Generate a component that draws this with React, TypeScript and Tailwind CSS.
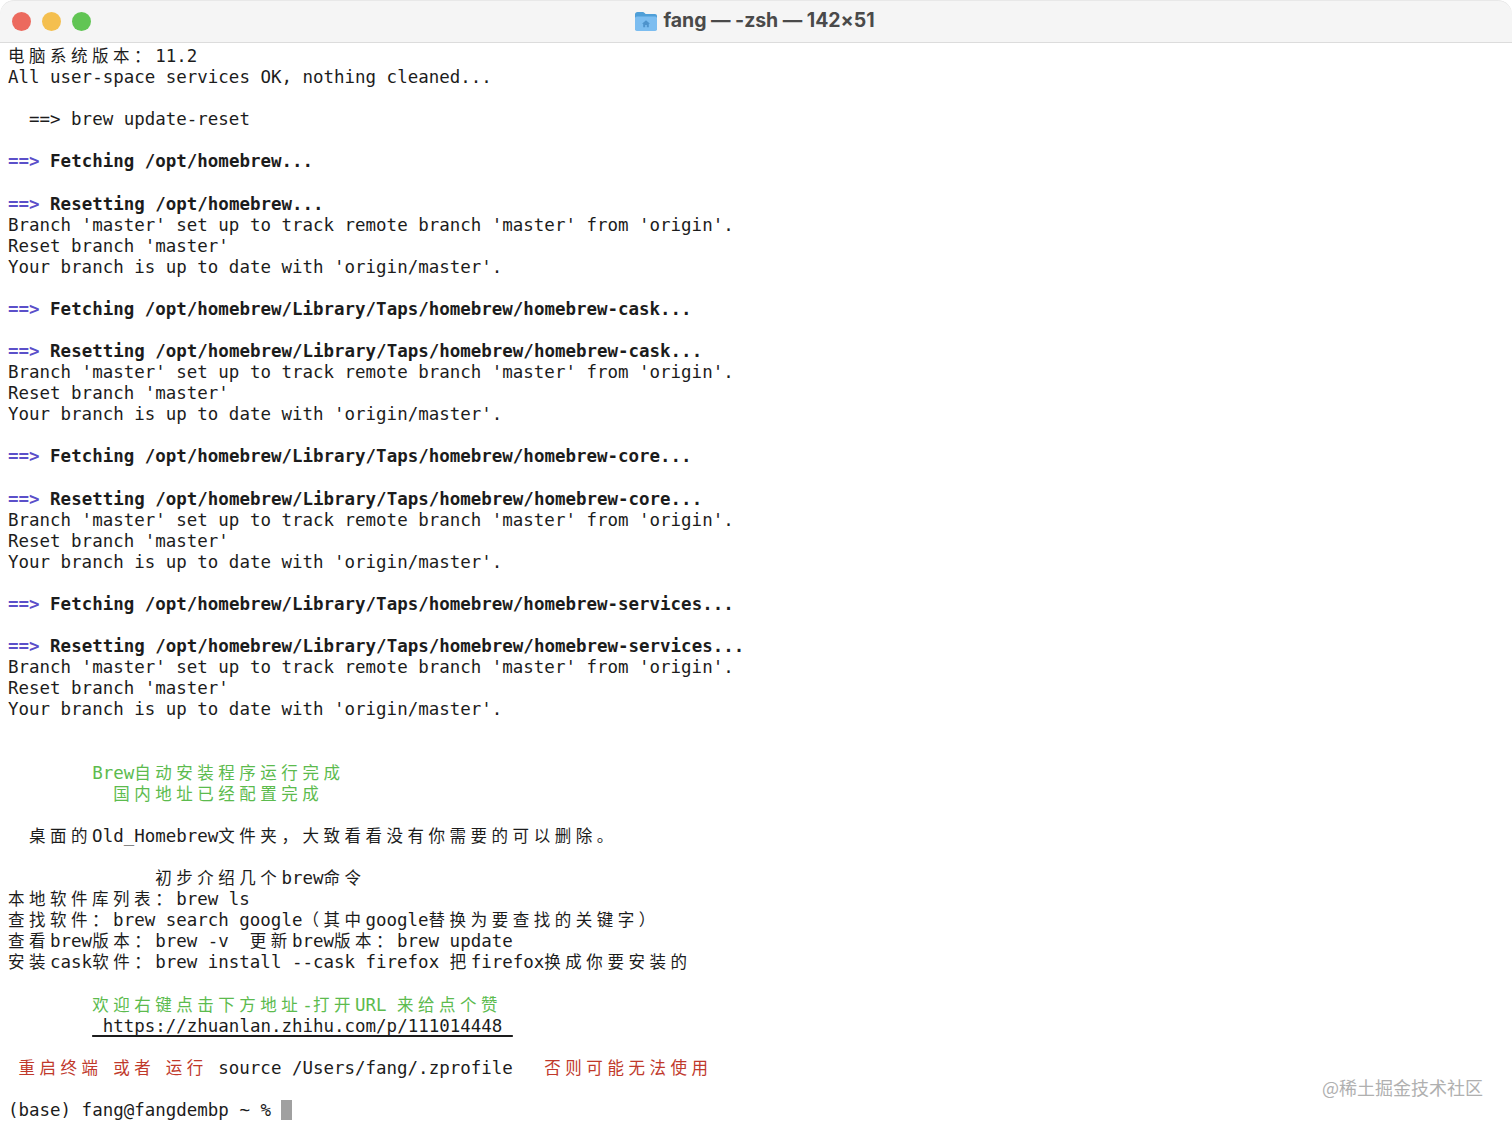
import React from "react";

const CJK = /([\u3000-\u9fff\uff00-\uffef]+)/;

function T({ children, className = "" }: { children: string; className?: string }) {
  const parts = children.split(CJK);
  return (
    <span className={className}>
      {parts.map((p, i) =>
        CJK.test(p) ? (
          <span key={i} className="text-[16.5px] leading-none tracking-[4.52px] font-normal [font-family:'Noto_Sans_CJK_SC','Noto_Sans',sans-serif]">
            {p}
          </span>
        ) : (
          <React.Fragment key={i}>{p}</React.Fragment>
        )
      )}
    </span>
  );
}

function Row({ children }: { children?: React.ReactNode }) {
  return <div className="h-[21.08px] leading-[21.08px] whitespace-pre">{children ?? " "}</div>;
}

function Head({ children }: { children: string }) {
  return (
    <Row>
      <span className="font-bold text-[#5b4fc9]">==&gt;</span> <span className="font-bold">{children}</span>
    </Row>
  );
}

function Git() {
  return (
    <>
      <Row>Branch 'master' set up to track remote branch 'master' from 'origin'.</Row>
      <Row>Reset branch 'master'</Row>
      <Row>Your branch is up to date with 'origin/master'.</Row>
    </>
  );
}

const green = "text-[#5cbb4e]";
const red = "text-[#c0392b]";

export default function App() {
  return (
    <div className="relative h-[1128px] w-full overflow-hidden bg-white">
      <div className="flex h-full flex-col overflow-hidden rounded-[14px] bg-white">
        <header className="flex h-[43px] shrink-0 items-center justify-center rounded-t-[14px] border-b border-[#dcdcdc] bg-[#f5f5f5] pr-[4px] shadow-[inset_0_1px_0_#e8e8e8]">
          <div className="absolute left-[11.5px] top-[11.5px] flex gap-[11px]">
            <span className="size-[19px] rounded-full bg-[#ec6a5e]" />
            <span className="size-[19px] rounded-full bg-[#f4bf4f]" />
            <span className="size-[19px] rounded-full bg-[#61c554]" />
          </div>
          <svg width="24" height="22" viewBox="0 0 24 22" className="mr-[6px]">
            <path d="M1 4.5C1 3 2 2 3.5 2h5.2c.8 0 1.4.3 1.9.9l1 1.1H21c1.2 0 2 .8 2 2v2H1z" fill="#4f9fd8" />
            <rect x="1" y="6.5" width="22" height="14.5" rx="1.8" fill="#7cbdf0" />
            <path d="M12 10.3l-4 3.4h1.2v3.6h2v-2.2h1.6v2.2h2v-3.6H16z" fill="#4e93cc" />
          </svg>
          <span className="text-[19.5px] leading-none font-bold tracking-[-0.05px] text-[#4a4a4a] [font-family:Inter,sans-serif]">fang — -zsh — 142×51</span>
        </header>
        <main className="flex-1 bg-white pl-[8px] pt-[3px] text-[17.48px] text-[#1c1c1c] [font-family:'DejaVu_Sans_Mono',monospace]">
          <Row><T>电脑系统版本：11.2</T></Row>
          <Row>All user-space services OK, nothing cleaned...</Row>
          <Row />
          <Row>  ==&gt; brew update-reset</Row>
          <Row />
          <Head>Fetching /opt/homebrew...</Head>
          <Row />
          <Head>Resetting /opt/homebrew...</Head>
          <Git />
          <Row />
          <Head>Fetching /opt/homebrew/Library/Taps/homebrew/homebrew-cask...</Head>
          <Row />
          <Head>Resetting /opt/homebrew/Library/Taps/homebrew/homebrew-cask...</Head>
          <Git />
          <Row />
          <Head>Fetching /opt/homebrew/Library/Taps/homebrew/homebrew-core...</Head>
          <Row />
          <Head>Resetting /opt/homebrew/Library/Taps/homebrew/homebrew-core...</Head>
          <Git />
          <Row />
          <Head>Fetching /opt/homebrew/Library/Taps/homebrew/homebrew-services...</Head>
          <Row />
          <Head>Resetting /opt/homebrew/Library/Taps/homebrew/homebrew-services...</Head>
          <Git />
          <Row />
          <Row />
          <Row><T className={green}>{"        Brew自动安装程序运行完成"}</T></Row>
          <Row><T className={green}>{"          国内地址已经配置完成"}</T></Row>
          <Row />
          <Row><T>{"  桌面的Old_Homebrew文件夹，大致看看没有你需要的可以删除。"}</T></Row>
          <Row />
          <Row><T>{"              初步介绍几个brew命令"}</T></Row>
          <Row><T>本地软件库列表：brew ls</T></Row>
          <Row><T>查找软件：brew search google（其中google替换为要查找的关键字）</T></Row>
          <Row><T>{"查看brew版本：brew -v  更新brew版本：brew update"}</T></Row>
          <Row><T>安装cask软件：brew install --cask firefox 把firefox换成你要安装的</T></Row>
          <Row />
          <Row><T className={green}>{"        欢迎右键点击下方地址-打开URL 来给点个赞"}</T></Row>
          <Row>{"        "}<span className="underline decoration-[1.5px] underline-offset-[3px] [text-decoration-skip-ink:none]">{" https://zhuanlan.zhihu.com/p/111014448 "}</span></Row>
          <Row />
          <Row>
            {" "}<T className={red}>{"重启终端 或者 运行"}</T>{" source /Users/fang/.zprofile   "}<T className={red}>否则可能无法使用</T>
          </Row>
          <Row />
          <Row>
            (base) fang@fangdembp ~ % <span className="inline-block h-[20px] w-[10.5px] align-top bg-[#a0a0a0]" />
          </Row>
        </main>
      </div>
      <span className="absolute left-[1322px] top-[1076px] text-[18px] leading-[22px] text-[#b0b0b0] [font-family:'Noto_Sans_CJK_SC',sans-serif]">@稀土掘金技术社区</span>
    </div>
  );
}
